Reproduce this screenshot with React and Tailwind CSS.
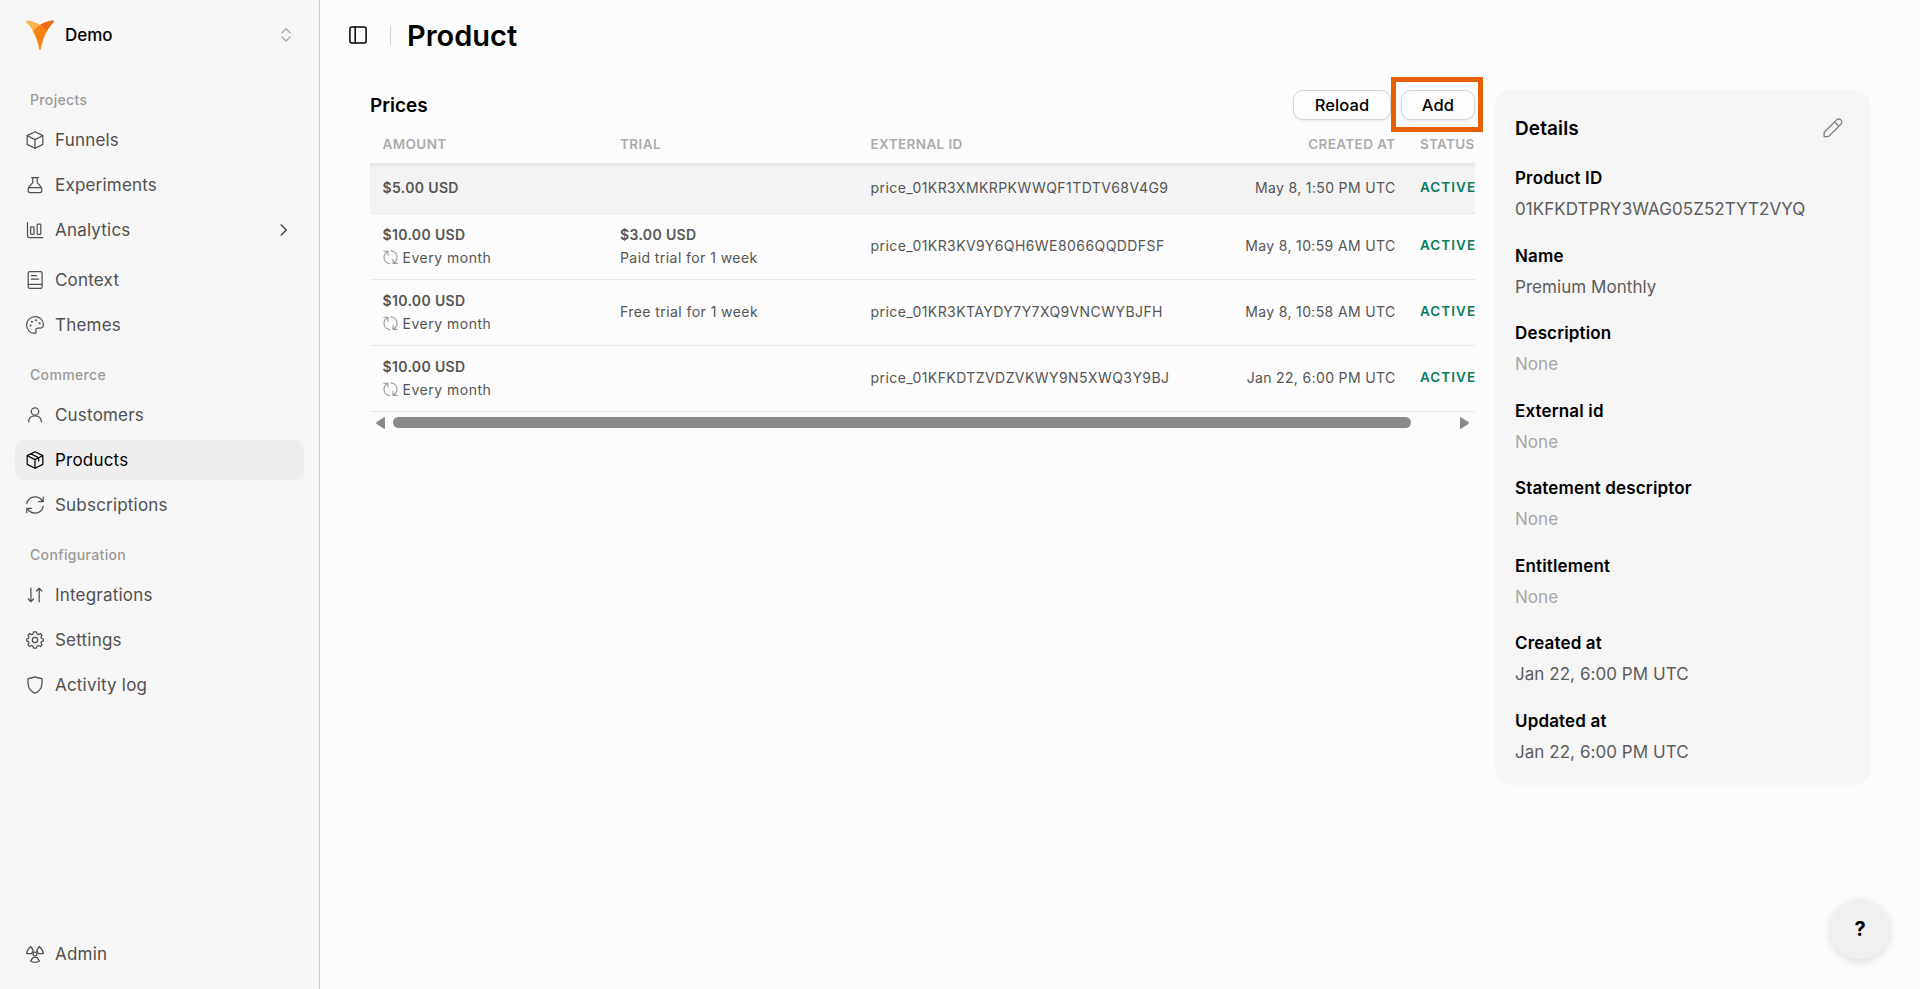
import clsx from "clsx";

function Icon({ size = 20, width = 1.25, className, children }) {
  return (
    <svg
      width={size}
      height={size}
      viewBox={`0 0 ${size} ${size}`}
      fill="none"
      stroke="currentColor"
      strokeWidth={width}
      strokeLinecap="round"
      strokeLinejoin="round"
      className={clsx("shrink-0", className)}
    >
      {children}
    </svg>
  );
}

const icons = {
  funnels: (
    <>
      <path d="M10 1.8 17.8 5.6V14.4L10 18.2 2.2 14.4V5.6Z" />
      <path d="M2.4 5.8 10 9.6 17.6 5.8M10 9.6V18" />
    </>
  ),
  experiments: (
    <>
      <path d="M6.6 2.6H13.4M7.8 2.6V7.6L4.2 11.6Q3.2 13 3.2 15V15.8A1.7 1.7 0 0 0 4.9 17.5H15.1A1.7 1.7 0 0 0 16.8 15.8V15Q16.8 13 15.8 11.6L12.2 7.6V2.6" />
      <path d="M3.6 12.5H16.4" />
    </>
  ),
  analytics: (
    <>
      <path d="M2.5 2.5V15.8A1.7 1.7 0 0 0 4.2 17.5H17.8" />
      <rect x="5.6" y="6.8" width="3.4" height="7.5" rx=".8" />
      <rect x="12.2" y="4.2" width="3.6" height="10.1" rx=".8" />
    </>
  ),
  context: (
    <>
      <rect x="3.2" y="1.7" width="13.9" height="16.7" rx="1.6" />
      <path d="M6.4 5.6H11.6M6.4 9.2H13.6M3.4 14.3H17" />
    </>
  ),
  themes: (
    <>
      <path d="M10 1.6C5.2 1.6 1.6 5.4 1.6 10S5.2 18.4 9.2 18.4C11.4 18.4 11.2 17 10.9 15.6 10.5 13.8 11.6 13.1 13 13.1H15.4C17.4 13.1 18.4 11.6 18.4 9.6 18.4 5 14.6 1.6 10 1.6Z" />
      <g fill="currentColor" stroke="none">
        <circle cx="5.6" cy="10.6" r="1.05" />
        <circle cx="6.9" cy="6.7" r="1.05" />
        <circle cx="11" cy="5.3" r="1.05" />
        <circle cx="14.6" cy="8.3" r="1.05" />
      </g>
    </>
  ),
  customers: (
    <>
      <circle cx="10" cy="6.5" r="3.7" />
      <path d="M3.7 16.8C3.7 13 6.4 10.9 10 10.9S16.3 13 16.3 16.8" />
    </>
  ),
  products: (
    <>
      <path d="M10 1.8 17.8 5.6V14.4L10 18.2 2.2 14.4V5.6Z" />
      <path d="M2.4 5.8 10 9.6 17.6 5.8M10 9.6V18M6 3.9 13.7 7.8V11" />
    </>
  ),
  subscriptions: (
    <>
      <path d="M1.8 8.6C2.4 4.8 5.8 1.9 9.9 1.9 13.3 1.9 16.2 3.8 17.6 6.6M18.2 2.2V6.7H13.5" />
      <path d="M18.2 11.4C17.6 15.2 14.2 18.1 10.1 18.1 6.7 18.1 3.8 16.2 2.4 13.4M1.8 17.8V13.3H6.5" />
    </>
  ),
  integrations: (
    <path d="M5.9 3.2V16.6M3.3 14 5.9 16.7 8.5 14M14.2 16.8V3.4M11.6 6 14.2 3.3 16.8 6" />
  ),
  settings: (
    <>
      <path d="M8.5 1.9H11.5L12 3.9 13.5 4.6 15.3 3.5 17.1 5.5 15.9 7.2 16.5 8.5 18.2 8.8V11.2L16.5 11.6 15.9 13 17.1 14.7 15.3 16.5 13.5 15.5 12 16.1 11.5 18.1H8.5L8 16.1 6.5 15.5 4.7 16.5 2.9 14.7 4.1 13 3.5 11.6 1.8 11.2V8.8L3.5 8.5 4.1 7.2 2.9 5.5 4.7 3.5 6.5 4.6 8 3.9Z" />
      <circle cx="10" cy="10" r="2.7" />
    </>
  ),
  activity: (
    <path d="M10 1.8C12.2 2.5 14.6 3.2 17 3.6 17.3 8.8 17.6 15 10 18.2 2.4 15 2.7 8.8 3 3.6 5.4 3.2 7.8 2.5 10 1.8Z" />
  ),
  admin: (
    <>
      <circle cx="10" cy="10" r="1.9" />
      <path d="M5.7 2.5C3.5 4.3 1.9 6.7 1.7 9.6H6.8C7 8.4 7.6 7.6 8.3 7 7.6 5.4 6.8 3.7 5.7 2.5Z" />
      <path d="M14.3 2.5C16.5 4.3 18.1 6.7 18.3 9.6H13.2C13 8.4 12.4 7.6 11.7 7 12.4 5.4 13.2 3.7 14.3 2.5Z" />
      <path d="M8.1 13.3H11.9L14.4 16.9C12.2 18.7 7.8 18.7 5.6 16.9Z" />
    </>
  ),
};

const groups = [
  {
    title: "Projects",
    items: [
      { id: "funnels", label: "Funnels" },
      { id: "experiments", label: "Experiments" },
      { id: "analytics", label: "Analytics", expandable: true },
      { id: "context", label: "Context", spaced: true },
      { id: "themes", label: "Themes" },
    ],
  },
  {
    title: "Commerce",
    items: [
      { id: "customers", label: "Customers" },
      { id: "products", label: "Products", active: true },
      { id: "subscriptions", label: "Subscriptions" },
    ],
  },
  {
    title: "Configuration",
    items: [
      { id: "integrations", label: "Integrations" },
      { id: "settings", label: "Settings" },
      { id: "activity", label: "Activity log" },
    ],
  },
];

const prices = [
  {
    amount: "$5.00 USD",
    externalId: "price_01KR3XMKRPKWWQF1TDTV68V4G9",
    createdAt: "May 8, 1:50 PM UTC",
  },
  {
    amount: "$10.00 USD",
    interval: "Every month",
    trialPrice: "$3.00 USD",
    trial: "Paid trial for 1 week",
    externalId: "price_01KR3KV9Y6QH6WE8066QQDDFSF",
    createdAt: "May 8, 10:59 AM UTC",
  },
  {
    amount: "$10.00 USD",
    interval: "Every month",
    trial: "Free trial for 1 week",
    externalId: "price_01KR3KTAYDY7Y7XQ9VNCWYBJFH",
    createdAt: "May 8, 10:58 AM UTC",
  },
  {
    amount: "$10.00 USD",
    interval: "Every month",
    externalId: "price_01KFKDTZVDZVKWY9N5XWQ3Y9BJ",
    createdAt: "Jan 22, 6:00 PM UTC",
  },
];

const details = [
  { label: "Product ID", value: "01KFKDTPRY3WAG05Z52TYT2VYQ" },
  { label: "Name", value: "Premium Monthly" },
  { label: "Description" },
  { label: "External id" },
  { label: "Statement descriptor" },
  { label: "Entitlement" },
  { label: "Created at", value: "Jan 22, 6:00 PM UTC" },
  { label: "Updated at", value: "Jan 22, 6:00 PM UTC" },
];

function Logo() {
  return (
    <svg width="28" height="30" viewBox="0 0 28 30" className="shrink-0">
      <path d="M0 1.6C0 .4 1.2.2 2.6.5 7 1.3 11 2.8 14 4.8L7 11.3C5.2 8 2.6 4.6.4 2.6Z" fill="#fbb252" />
      <path d="M28 1.6C28 .4 26.8.2 25.4.5 21 1.3 17 2.8 14 4.8L21 11.3C22.8 8 25.4 4.6 27.6 2.6Z" fill="#ee6a14" />
      <path d="M14 4.8C11.2 6.6 8.8 8.8 7 11.3 10 16.8 12.2 22.4 13 28.6Q13.2 30 14 30T15 28.6C15.8 22.4 18 16.8 21 11.3 19.2 8.8 16.8 6.6 14 4.8Z" fill="#f58413" />
    </svg>
  );
}

function NavItem({ id, label, active, expandable, spaced }) {
  return (
    <a
      className={clsx(
        "flex h-10 items-center rounded-[10px] pl-[10px] pr-[13px] text-[17px] tracking-[0.2px]",
        active ? "bg-[#eeeeee] text-black" : "text-[#505050]",
        spaced && "mt-[5px]"
      )}
    >
      <Icon>{icons[id]}</Icon>
      <span className="ml-[10px] grow pt-[2px]">{label}</span>
      {expandable && (
        <Icon size={14} width={1.7}>
          <path d="M4.3 2 9.3 7 4.3 12" />
        </Icon>
      )}
    </a>
  );
}

function Sidebar() {
  return (
    <aside className="flex w-80 shrink-0 flex-col border-r border-[#cfcfcf] bg-[#f7f7f7] px-[15px]">
      <div className="flex h-[70px] items-center pl-[11px] pr-[10px]">
        <Logo />
        <span className="ml-[11px] grow pt-px text-[17px] font-medium text-black">Demo</span>
        <Icon size={16} width={1.3} className="text-[#a8a8a8]">
          <path d="M4 5.8 8 1.8 12 5.8M4 10 8 14 12 10" />
        </Icon>
      </div>
      <nav className="flex flex-col gap-[10px] pt-[10px]">
        {groups.map((group) => (
          <div key={group.title} className="flex flex-col gap-[5px]">
            <h3 className="flex h-[35px] items-center pl-[15px] pt-[5px] text-sm font-medium tracking-[0.35px] text-[#999999]">
              {group.title}
            </h3>
            {group.items.map((item) => (
              <NavItem key={item.id} {...item} />
            ))}
          </div>
        ))}
      </nav>
      <div className="mt-auto pb-[15px]">
        <NavItem id="admin" label="Admin" />
      </div>
    </aside>
  );
}

function OutlineButton({ className, children }) {
  return (
    <button
      className={clsx(
        "h-[30px] rounded-[10px] border border-[#d4d4d4] bg-[#fdfdfd] text-[16.5px] font-medium leading-[26px] tracking-[0.1px] text-black shadow-[0_1px_2px_rgba(0,0,0,0.08)]",
        className
      )}
    >
      {children}
    </button>
  );
}

function RenewIcon() {
  return (
    <Icon size={15} width={1.1} className="text-[#9a9a9a]">
      <path d="M.8 1.2H5V5.2M4.8 1.5C2.4 2.7 1 4.8 1 7.3 1 10.7 3.5 13.3 7 13.7" />
      <path d="M14.2 13.4H10V9.4M10.2 13.1C12.6 11.9 14 9.8 14 7.3 14 3.9 11.5 1.3 8 .9" />
    </Icon>
  );
}

const columns = "grid grid-cols-[237.5px_250.5px_312px_213px_92px]";

function PriceRow({ price, first }) {
  return (
    <div
      className={clsx(
        columns,
        "items-center border-b border-[#e8e8e8] pb-[2px] pl-[12.5px] text-sm tracking-[0.43px] text-[#555555]",
        first
          ? "h-[51px] border-t border-t-[#e8e8e8] bg-[#f4f4f4] shadow-[inset_0_3px_3px_-1px_rgba(0,0,0,0.07)]"
          : "h-[66px]"
      )}
    >
      <div>
        <div className="font-semibold leading-[23px] tracking-[0.35px]">{price.amount}</div>
        {price.interval && (
          <div className="flex items-center gap-[5px] leading-[23px] tracking-[0.5px]">
            <RenewIcon />
            {price.interval}
          </div>
        )}
      </div>
      <div className="leading-[23px]">
        {price.trialPrice && <div className="font-semibold tracking-[0.35px]">{price.trialPrice}</div>}
        {price.trial}
      </div>
      <div>{price.externalId}</div>
      <div className="text-right tracking-[0.35px]">{price.createdAt}</div>
      <div className="pl-[24.5px] pt-px text-[13.5px] font-semibold tracking-[1.05px] text-[#0b7a5c]">ACTIVE</div>
    </div>
  );
}

function ScrollBar() {
  return (
    <div className="flex h-4 items-center justify-between pl-[6px] pr-[6px] pt-[5px]">
      <svg width="9" height="12" viewBox="0 0 9 12" fill="#8b8b8b">
        <path d="M9 1V11Q9 12.4 7.6 11.6L.6 6.9Q-.4 6 .6 5.1L7.6.4Q9-.4 9 1Z" />
      </svg>
      <div className="ml-2 mr-auto h-[11px] w-[1018px] rounded-full bg-[#8b8b8b]" />
      <svg width="9" height="12" viewBox="0 0 9 12" fill="#8b8b8b">
        <path d="M0 1V11Q0 12.4 1.4 11.6L8.4 6.9Q9.4 6 8.4 5.1L1.4.4Q0-.4 0 1Z" />
      </svg>
    </div>
  );
}

function Prices() {
  return (
    <section className="w-[1105px]">
      <div className="flex h-[30px] items-center">
        <h2 className="grow pt-[2px] text-[19px] font-semibold text-black">Prices</h2>
        <div className="flex gap-[10px]">
          <OutlineButton className="w-[98px]">Reload</OutlineButton>
          <div className="relative">
            <OutlineButton className="w-[74px]">Add</OutlineButton>
            <div className="absolute -left-[10px] -top-[13px] h-[55px] w-[92px] border-[5px] border-[#e65f00]" />
          </div>
        </div>
      </div>
      <div className="overflow-hidden whitespace-nowrap">
        <div
          className={clsx(
            columns,
            "h-[43px] items-center pl-[12.5px] pt-[4px] text-[13.5px] font-semibold leading-[20px] tracking-[0.4px] text-[#acacac]"
          )}
        >
          <span>AMOUNT</span>
          <span>TRIAL</span>
          <span>EXTERNAL ID</span>
          <span className="text-right">CREATED AT</span>
          <span className="pl-[24.5px] tracking-[0.3px]">STATUS</span>
        </div>
        {prices.map((price, i) => (
          <PriceRow key={price.externalId} price={price} first={i === 0} />
        ))}
      </div>
      <ScrollBar />
    </section>
  );
}

function Details() {
  return (
    <aside className="h-[695px] w-[375px] rounded-[15px] bg-[#f6f6f6] px-5">
      <div className="flex h-[76px] items-center">
        <h2 className="grow pt-[2px] text-[19px] font-semibold tracking-[0.1px] text-black">Details</h2>
        <Icon size={20} width={1.3} className="mb-px mr-[7px] text-[#808080]">
          <path d="M1.1 18.6V15.2Q1.1 14.4 1.7 13.8L13.6 1.9A2.75 2.75 0 0 1 17.9 6.2L6 18Q5.4 18.6 4.6 18.6Z M11.6 4 15.9 8.2" />
        </Icon>
      </div>
      <dl className="flex flex-col">
        {details.map(({ label, value }) => (
          <div key={label} className="h-[77.5px]">
            <dt className="h-[31px] text-[17px] font-semibold leading-[24px] tracking-[0.15px] text-black">{label}</dt>
            <dd className={clsx("text-[17px] leading-[24px] tracking-[0.05px]", value ? "text-[#5c5c5c]" : "text-[#a6a6a6]")}>
              {value ?? "None"}
            </dd>
          </div>
        ))}
      </dl>
    </aside>
  );
}

export default function App() {
  return (
    <div className="flex h-[989px] w-[1920px] overflow-hidden bg-[#fcfcfc] font-['Inter','Liberation_Sans',sans-serif]">
      <Sidebar />
      <main className="relative grow">
        <header className="flex h-[70px] items-center pl-7 text-black">
          <Icon width={1.5}>
            <rect x="1.9" y="1.9" width="16.2" height="16.2" rx="2" />
            <path d="M7.2 2V18" />
          </Icon>
          <div className="ml-[22px] h-5 w-px bg-[#d0d0d0]" />
          <h1 className="ml-4 pt-[2px] text-[29px] font-semibold">Product</h1>
        </header>
        <div className="flex gap-5 pl-[50px] pt-5">
          <Prices />
          <Details />
        </div>
        <button className="absolute bottom-[30px] right-[30px] flex size-[60px] items-center justify-center rounded-full bg-[#f0f0f0] text-[20px] font-bold text-black shadow-[0_3px_8px_rgba(0,0,0,0.12)]">
          ?
        </button>
      </main>
    </div>
  );
}
